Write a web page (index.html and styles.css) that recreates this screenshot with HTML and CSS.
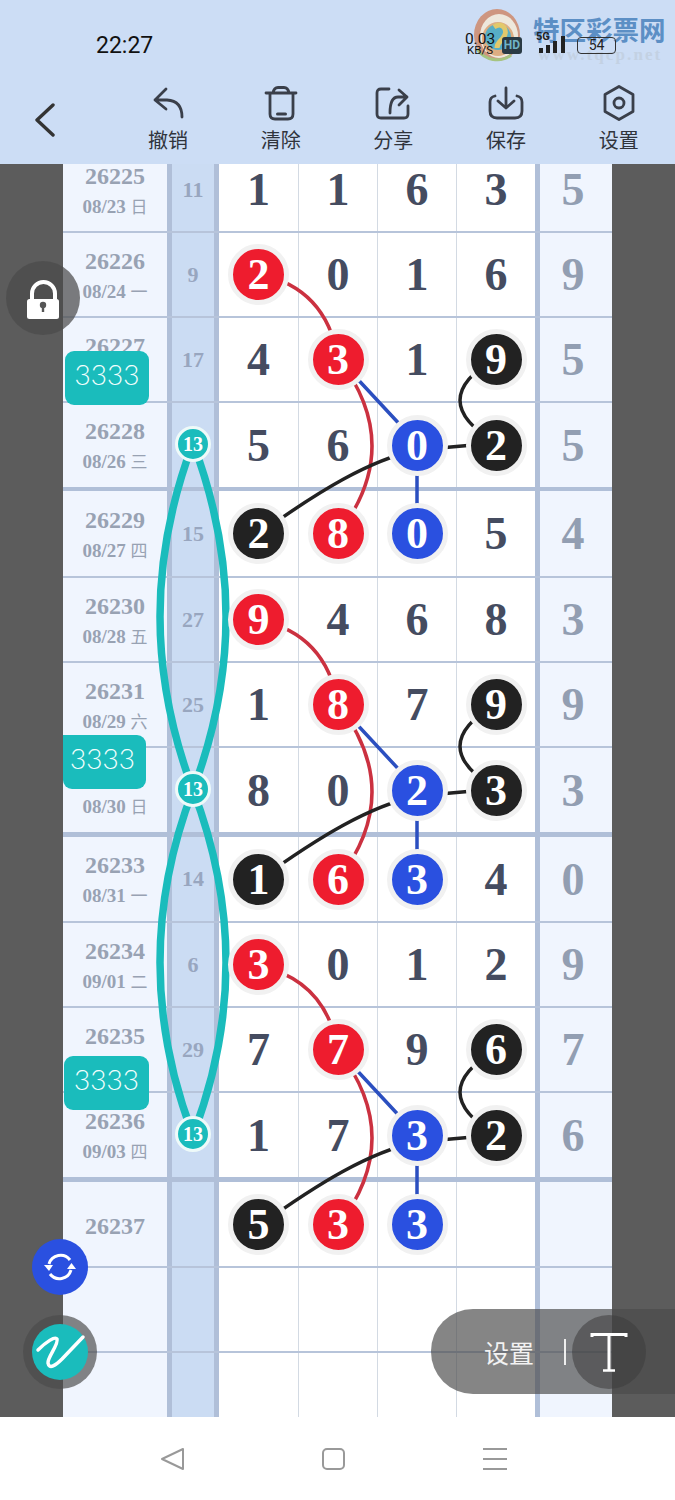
FILE: index.html
```html
<!DOCTYPE html>
<html>
	<head>
		<meta charset="UTF-8">
		<title></title>
		<link rel="stylesheet" href="styles.css">
	</head>
	<body>
		<div class="header">
			<svg class="logo" width="60" height="60" viewBox="0 0 60 60">
				<ellipse cx="30" cy="30" rx="23" ry="26" fill="#cf8a6c"/>
				<ellipse cx="32" cy="31" rx="19" ry="22" fill="#f4ead8"/>
				<ellipse cx="31" cy="34" rx="16" ry="17" fill="#e0a56f"/>
				<circle cx="31" cy="32" r="13" fill="#43a6bd"/>
				<path d="M27 22C36 16 42 26 36 33C33 37 30 38 30 43" fill="none" stroke="#e6c653" stroke-width="5"/>
				<path d="M10 44C18 56 34 58 44 50" fill="none" stroke="#9fc06c" stroke-width="3"/>
			</svg>
			<div class="brand">特区彩票网</div>
			<div class="brand-url">www.tqcp.net</div>
			<div class="status">
				<div class="time">22:27</div>
				<div class="net"><b>0.03</b><span>KB/S</span></div>
				<div class="hd">HD</div>
				<div class="signal">
					<span class="fiveg">5G</span>
					<svg width="29" height="20" viewBox="0 0 29 20">
						<rect x="1" y="13" width="4" height="5" fill="#222"/>
						<rect x="8" y="10" width="4" height="8" fill="#222"/>
						<rect x="15" y="6" width="4" height="12" fill="#222"/>
						<rect x="23" y="1" width="4" height="17" fill="#222"/>
					</svg>
				</div>
				<div class="battery">54</div>
			</div>
			<div class="toolbar">
				<div class="back">
					<svg width="20" height="34" viewBox="0 0 20 34"><path d="M18 2L2 17L18 32" fill="none" stroke="#333" stroke-width="3.4" stroke-linecap="round" stroke-linejoin="round"/></svg>
				</div>
				<div class="tool">
					<svg width="36" height="36" viewBox="0 0 36 36"><path d="M16 4L5 15L16 24M5 15H17Q32 16 32 32" fill="none" stroke="#3a3f4a" stroke-width="2.8" stroke-linecap="round" stroke-linejoin="round"/></svg>
					<span>撤销</span>
				</div>
				<div class="tool">
					<svg width="36" height="36" viewBox="0 0 36 36"><path d="M3 8H33M10 8Q11 2.500 15 2.500H21Q25 2.500 26 8M7 8V29Q7 34 12 34H25Q30 34 30 29V8" fill="none" stroke="#3a3f4a" stroke-width="2.8" stroke-linecap="round" stroke-linejoin="round"/><path d="M14.500 29H22.500" stroke="#3a3f4a" stroke-width="3" stroke-linecap="round"/></svg>
					<span>清除</span>
				</div>
				<div class="tool">
					<svg width="36" height="36" viewBox="0 0 36 36"><path d="M14 4H6Q2 4 2 8V29Q2 33 6 33H29Q33 33 33 29V21M24 5L32 12L24 20M32 12H23Q15 12 15 28" fill="none" stroke="#3a3f4a" stroke-width="2.8" stroke-linecap="round" stroke-linejoin="round"/></svg>
					<span>分享</span>
				</div>
				<div class="tool">
					<svg width="38" height="36" viewBox="0 0 38 36"><path d="M8 11Q3 12 3 17V26Q3 33 10 33H28Q35 33 35 26V17Q35 12 30 11M19 3V23M11 16L19 23L27 16" fill="none" stroke="#3a3f4a" stroke-width="2.8" stroke-linecap="round" stroke-linejoin="round"/></svg>
					<span>保存</span>
				</div>
				<div class="tool">
					<svg width="36" height="36" viewBox="0 0 36 36"><path d="M18 1.500L32 9.500V26.500L18 34.500L4 26.500V9.500Z" fill="none" stroke="#3a3f4a" stroke-width="2.8" stroke-linejoin="round"/><circle cx="18" cy="18" r="5" fill="none" stroke="#3a3f4a" stroke-width="2.8"/></svg>
					<span>设置</span>
				</div>
			</div>
		</div>

		<div class="sheet">
			<div class="table">
				<div class="row first">
					<div class="date"><b>26225</b><span>08/23 <i>日</i></span></div><div class="sum">11</div>
					<div class="cell">1</div><div class="cell">1</div><div class="cell">6</div><div class="cell">3</div><div class="last">5</div>
				</div>
				<div class="row">
					<div class="date"><b>26226</b><span>08/24 <i>一</i></span></div><div class="sum">9</div>
					<div class="cell"><span class="ball red">2</span></div><div class="cell">0</div><div class="cell">1</div><div class="cell">6</div><div class="last">9</div>
				</div>
				<div class="row">
					<div class="date"><b>26227</b><span>08/25 <i>二</i></span></div><div class="sum">17</div>
					<div class="cell">4</div><div class="cell"><span class="ball red">3</span></div><div class="cell">1</div><div class="cell"><span class="ball black">9</span></div><div class="last">5</div>
				</div>
				<div class="row end first-end">
					<div class="date"><b>26228</b><span>08/26 <i>三</i></span></div><div class="sum"><span class="total">13</span></div>
					<div class="cell">5</div><div class="cell">6</div><div class="cell"><span class="ball blue">0</span></div><div class="cell"><span class="ball black">2</span></div><div class="last">5</div>
				</div>
				<div class="row start first-start">
					<div class="date"><b>26229</b><span>08/27 <i>四</i></span></div><div class="sum">15</div>
					<div class="cell"><span class="ball black">2</span></div><div class="cell"><span class="ball red">8</span></div><div class="cell"><span class="ball blue">0</span></div><div class="cell">5</div><div class="last">4</div>
				</div>
				<div class="row">
					<div class="date"><b>26230</b><span>08/28 <i>五</i></span></div><div class="sum">27</div>
					<div class="cell"><span class="ball red">9</span></div><div class="cell">4</div><div class="cell">6</div><div class="cell">8</div><div class="last">3</div>
				</div>
				<div class="row">
					<div class="date"><b>26231</b><span>08/29 <i>六</i></span></div><div class="sum">25</div>
					<div class="cell">1</div><div class="cell"><span class="ball red">8</span></div><div class="cell">7</div><div class="cell"><span class="ball black">9</span></div><div class="last">9</div>
				</div>
				<div class="row end">
					<div class="date"><b>26232</b><span>08/30 <i>日</i></span></div><div class="sum"><span class="total">13</span></div>
					<div class="cell">8</div><div class="cell">0</div><div class="cell"><span class="ball blue">2</span></div><div class="cell"><span class="ball black">3</span></div><div class="last">3</div>
				</div>
				<div class="row start">
					<div class="date"><b>26233</b><span>08/31 <i>一</i></span></div><div class="sum">14</div>
					<div class="cell"><span class="ball black">1</span></div><div class="cell"><span class="ball red">6</span></div><div class="cell"><span class="ball blue">3</span></div><div class="cell">4</div><div class="last">0</div>
				</div>
				<div class="row">
					<div class="date"><b>26234</b><span>09/01 <i>二</i></span></div><div class="sum">6</div>
					<div class="cell"><span class="ball red">3</span></div><div class="cell">0</div><div class="cell">1</div><div class="cell">2</div><div class="last">9</div>
				</div>
				<div class="row">
					<div class="date"><b>26235</b><span>09/02 <i>三</i></span></div><div class="sum">29</div>
					<div class="cell">7</div><div class="cell"><span class="ball red">7</span></div><div class="cell">9</div><div class="cell"><span class="ball black">6</span></div><div class="last">7</div>
				</div>
				<div class="row end">
					<div class="date"><b>26236</b><span>09/03 <i>四</i></span></div><div class="sum"><span class="total">13</span></div>
					<div class="cell">1</div><div class="cell">7</div><div class="cell"><span class="ball blue">3</span></div><div class="cell"><span class="ball black">2</span></div><div class="last">6</div>
				</div>
				<div class="row start">
					<div class="date"><b>26237</b></div><div class="sum"></div>
					<div class="cell"><span class="ball black">5</span></div><div class="cell"><span class="ball red">3</span></div><div class="cell"><span class="ball blue">3</span></div><div class="cell"></div><div class="last"></div>
				</div>
				<div class="row">
					<div class="date"></div><div class="sum"></div>
					<div class="cell"></div><div class="cell"></div><div class="cell"></div><div class="cell"></div><div class="last"></div>
				</div>
				<div class="row open">
					<div class="date"></div><div class="sum"></div>
					<div class="cell"></div><div class="cell"></div><div class="cell"></div><div class="cell"></div><div class="last"></div>
				</div>
			</div>

			<!-- lines between balls, page coordinates -->
			<svg class="links" width="675" height="1253" viewBox="0 164 675 1253" fill="none">
				<defs>
					<g id="group" stroke-width="3.500">
						<path d="M259 274Q326 288 338 358" stroke="#cb3140"/>
						<path d="M338 358Q406 446 338 534" stroke="#cb3140"/>
						<path d="M338 358L417 443V534" stroke="#2b4fc0"/>
						<path d="M496 358Q424 400 496 443" stroke="#222"/>
						<path d="M496 443L417 450C370 460 320 490 259 534" stroke="#222"/>
					</g>
				</defs>
				<use href="#group"/>
				<use href="#group" y="346"/>
				<use href="#group" y="692"/>
				<g stroke="#1abcbc" stroke-width="7.500">
					<path d="M193 443C149 560 149 673 193 790"/>
					<path d="M193 443C237 560 237 673 193 790"/>
					<path d="M193 790C149 905 149 1020 193 1135"/>
					<path d="M193 790C237 905 237 1020 193 1135"/>
				</g>
			</svg>

			<div class="tag tag-a">3333</div>
			<div class="tag tag-b">3333</div>
			<div class="tag tag-c">3333</div>

			<div class="lock">
				<svg width="74" height="74" viewBox="0 0 74 74">
					<path d="M26 38V32.500A11.500 11.500 0 0 1 49 32.500V38" fill="none" stroke="#fff" stroke-width="4"/>
					<rect x="21" y="38" width="32" height="20" rx="2.500" fill="#fff"/>
					<circle cx="37" cy="44" r="3.200" fill="#555"/>
					<rect x="35.800" y="44" width="2.400" height="7" fill="#555"/>
				</svg>
			</div>
			<div class="sync">
				<svg width="56" height="56" viewBox="0 0 56 56" fill="none" stroke="#fff" stroke-width="3">
					<path d="M17 25A12 12 0 0 1 38 21"/>
					<path d="M39 31A12 12 0 0 1 18 35"/>
					<polygon points="12,26 21,26 17,32" fill="#fff" stroke="none"/>
					<polygon points="35,30 44,30 39.500,24" fill="#fff" stroke="none"/>
				</svg>
			</div>
			<div class="pen">
				<div class="pen-in">
					<svg width="56" height="56" viewBox="0 0 56 56"><path d="M6 26C14 18 23 12 25 15C27 20 15 34 16 39C17 46 24 41 30 35L51 13" fill="none" stroke="#fff" stroke-width="3.500" stroke-linecap="round"/></svg>
				</div>
			</div>
			<div class="pill">
				<span class="pill-text">设置</span>
				<span class="pill-bar"></span>
				<div class="pill-t">
					<svg width="74" height="74" viewBox="0 0 74 74" fill="none" stroke="#fff"><path d="M20 22V19.500H54V22M37 19.500V55" stroke-width="3"/><path d="M31 55.500H43" stroke-width="2.500"/></svg>
				</div>
			</div>
		</div>

		<div class="nav">
			<svg width="24" height="24" viewBox="0 0 24 24"><path d="M2 12L23 2V22Z" fill="none" stroke="#999" stroke-width="2" stroke-linejoin="round"/></svg>
			<svg width="24" height="24" viewBox="0 0 24 24"><rect x="2" y="2" width="21" height="20" rx="4" fill="none" stroke="#999" stroke-width="2"/></svg>
			<svg width="26" height="24" viewBox="0 0 26 24"><path d="M1 2H25M1 12H25M1 22H25" stroke="#999" stroke-width="2"/></svg>
		</div>
	</body>
</html>
```
FILE: styles.css
```css
*{
	box-sizing: border-box;
}
body{
	margin: 0;
	width: 675px;
	height: 1500px;
	overflow: hidden;
	background: #fff;
	font-family: "Liberation Serif", "Noto Sans CJK SC", serif;
}

/* header */
.header{
	position: relative;
	height: 164px;
	background: #ccddf5;
	font-family: "Noto Sans", "Noto Sans CJK SC", sans-serif;
}
.logo{
	position: absolute;
	left: 467px;
	top: 5px;
	opacity: .85;
}
.brand{
	position: absolute;
	left: 533px;
	top: 11px;
	font-size: 26.500px;
	line-height: 38px;
	font-weight: 700;
	color: #5c8fc5;
	white-space: nowrap;
}
.brand-url{
	position: absolute;
	left: 538px;
	top: 45px;
	font-family: "Liberation Serif", serif;
	font-size: 17px;
	font-weight: 700;
	letter-spacing: 2.100px;
	color: #c3d1e3;
	white-space: nowrap;
}
.status{
	position: relative;
	display: flex;
	align-items: center;
	height: 85px;
	padding: 5px 59px 0 96px;
}
.time{
	font-family: "Roboto", sans-serif;
	font-size: 23px;
	color: #111;
	margin-right: auto;
}
.net{
	display: flex;
	flex-direction: column;
	align-items: center;
	width: 32px;
	color: #111;
	font-family: "Roboto", sans-serif;
	line-height: 11px;
}
.net b{
	font-size: 15.500px;
	font-weight: 400;
}
.net span{
	font-size: 11.500px;
}
.hd{
	width: 20px;
	height: 17px;
	margin: 0 16px 0 6px;
	border-radius: 3px;
	background: #2a3a44;
	color: #6fb4c8;
	font: 700 12px/17px "Roboto", sans-serif;
	text-align: center;
}
.signal{
	position: relative;
	width: 29px;
	height: 20px;
	margin-right: 10px;
}
.signal svg{
	display: block;
}
.fiveg{
	position: absolute;
	left: -2px;
	top: -4px;
	font: 700 11px/12px "Roboto", sans-serif;
	color: #222;
}
.battery{
	width: 39px;
	height: 17px;
	border: 1.500px solid #333;
	border-radius: 4px;
	font: 14px/14px "Roboto", sans-serif;
	color: #222;
	text-align: center;
}
.toolbar{
	position: relative;
	display: flex;
	height: 79px;
}
.back{
	width: 112px;
	padding: 18px 0 0 35px;
}
.tool{
	display: flex;
	flex-direction: column;
	align-items: center;
	width: 113px;
}
.tool svg{
	display: block;
	height: 36px;
}
.tool span{
	margin-top: 7px;
	font-size: 20px;
	line-height: 26px;
	color: #30343c;
}

/* table */
.sheet{
	position: relative;
	height: 1253px;
	overflow: hidden;
	background: #5c5c5c;
}
.table{
	width: 549px;
	height: 1269px;
	margin: -16px 0 0 63px;
}
.row{
	display: grid;
	grid-template-columns: 104px 52px repeat(4, 79px) 77px;
	height: 85px;
	border-bottom: 2px solid #b7c4da;
}
.row.end{
	height: 89px;
	border-bottom: 5px solid #b0bfd8;
}
.row.start{
	height: 86px;
}
.row.first-end{
	height: 88px;
	border-bottom-width: 4px;
}
.row.first-start{
	height: 87px;
}
.row.open{
	height: 64px;
	border-bottom: 0;
}
.date{
	display: flex;
	flex-direction: column;
	align-items: center;
	justify-content: center;
	background: #f0f5fe;
	color: #98a2b3;
	font-weight: 700;
	padding-top: 3px;
}
.date b{
	font-size: 24px;
	line-height: 30px;
}
.date span{
	font-size: 19px;
	line-height: 30px;
	white-space: nowrap;
}
.date i{
	font-style: normal;
	font-weight: 400;
	font-size: 17px;
	font-family: "Noto Sans CJK SC", sans-serif;
}
.sum{
	display: flex;
	align-items: center;
	justify-content: center;
	background: #cbdcf3;
	border-left: 5px solid #b0bfd8;
	border-right: 5px solid #b0bfd8;
	color: #98a6bf;
	font-size: 22px;
	font-weight: 700;
}
.cell,
.last{
	display: flex;
	align-items: center;
	justify-content: center;
	font-size: 46px;
	font-weight: 700;
}
.cell{
	background: #fff;
	border-left: 1px solid #d3dae3;
	color: #454c60;
}
.cell:nth-child(3){
	border-left: 0;
}
.last{
	background: #f0f5fe;
	border-left: 5px solid #b0bfd8;
	padding-right: 6px;
	color: #929eb2;
}
.ball{
	position: relative;
	z-index: 2;
	width: 61px;
	height: 61px;
	flex: none;
	border: 5px solid #f1f1f1;
	border-radius: 50%;
	color: #fff;
	font-size: 44px;
	line-height: 51px;
	text-align: center;
}
.red{
	background: #ee1c2e;
}
.black{
	background: #222;
}
.blue{
	background: #2a50e0;
}
.total{
	position: relative;
	z-index: 2;
	width: 36px;
	height: 36px;
	margin-top: -3px;
	border: 3px solid #eefaf9;
	border-radius: 50%;
	background: #1abcbc;
	color: #fff;
	font-size: 20px;
	line-height: 30px;
	text-align: center;
}
.links{
	position: absolute;
	left: 0;
	top: 0;
	z-index: 1;
}

/* things lying over the table */
.tag{
	position: absolute;
	z-index: 3;
	height: 54px;
	border-radius: 9px;
	background: #1abcbc;
	color: #f2fffe;
	font-family: "Lato", sans-serif;
	font-weight: 300;
	font-size: 28px;
	line-height: 47px;
	text-align: center;
}
.tag-a{
	left: 65px;
	top: 187px;
	width: 84px;
}
.tag-b{
	left: 63px;
	top: 571px;
	width: 83px;
	padding-right: 4px;
	border-radius: 0 9px 9px 9px;
}
.tag-c{
	left: 64px;
	top: 892px;
	width: 85px;
}
.lock{
	position: absolute;
	z-index: 3;
	left: 6px;
	top: 97px;
	width: 74px;
	height: 74px;
	border-radius: 50%;
	background: rgba(75, 75, 75, .72);
}
.sync{
	position: absolute;
	z-index: 3;
	left: 32px;
	top: 1075px;
	width: 56px;
	height: 56px;
	border-radius: 50%;
	background: #2a50e0;
}
.pen{
	position: absolute;
	z-index: 3;
	left: 23px;
	top: 1151px;
	width: 74px;
	height: 74px;
	padding: 9px;
	border-radius: 50%;
	background: rgba(75, 75, 75, .68);
}
.pen-in{
	width: 56px;
	height: 56px;
	border-radius: 50%;
	background: #1abcbc;
}
.pill{
	position: absolute;
	z-index: 3;
	left: 431px;
	top: 1145px;
	width: 244px;
	height: 85px;
	display: flex;
	align-items: center;
	padding-left: 53px;
	border-radius: 42px 0 0 42px;
	background: rgba(75, 75, 75, .68);
}
.pill-text{
	font-family: "Noto Sans CJK SC", sans-serif;
	font-size: 25px;
	color: #f2f2f2;
}
.pill-bar{
	width: 2px;
	height: 26px;
	margin: 0 6px 0 30px;
	background: #eee;
}
.pill-t{
	width: 74px;
	height: 74px;
	border-radius: 50%;
	background: rgba(60, 60, 60, .55);
}

/* bottom bar */
.nav{
	display: flex;
	align-items: center;
	gap: 137px;
	height: 83px;
	padding-left: 160px;
}
```
